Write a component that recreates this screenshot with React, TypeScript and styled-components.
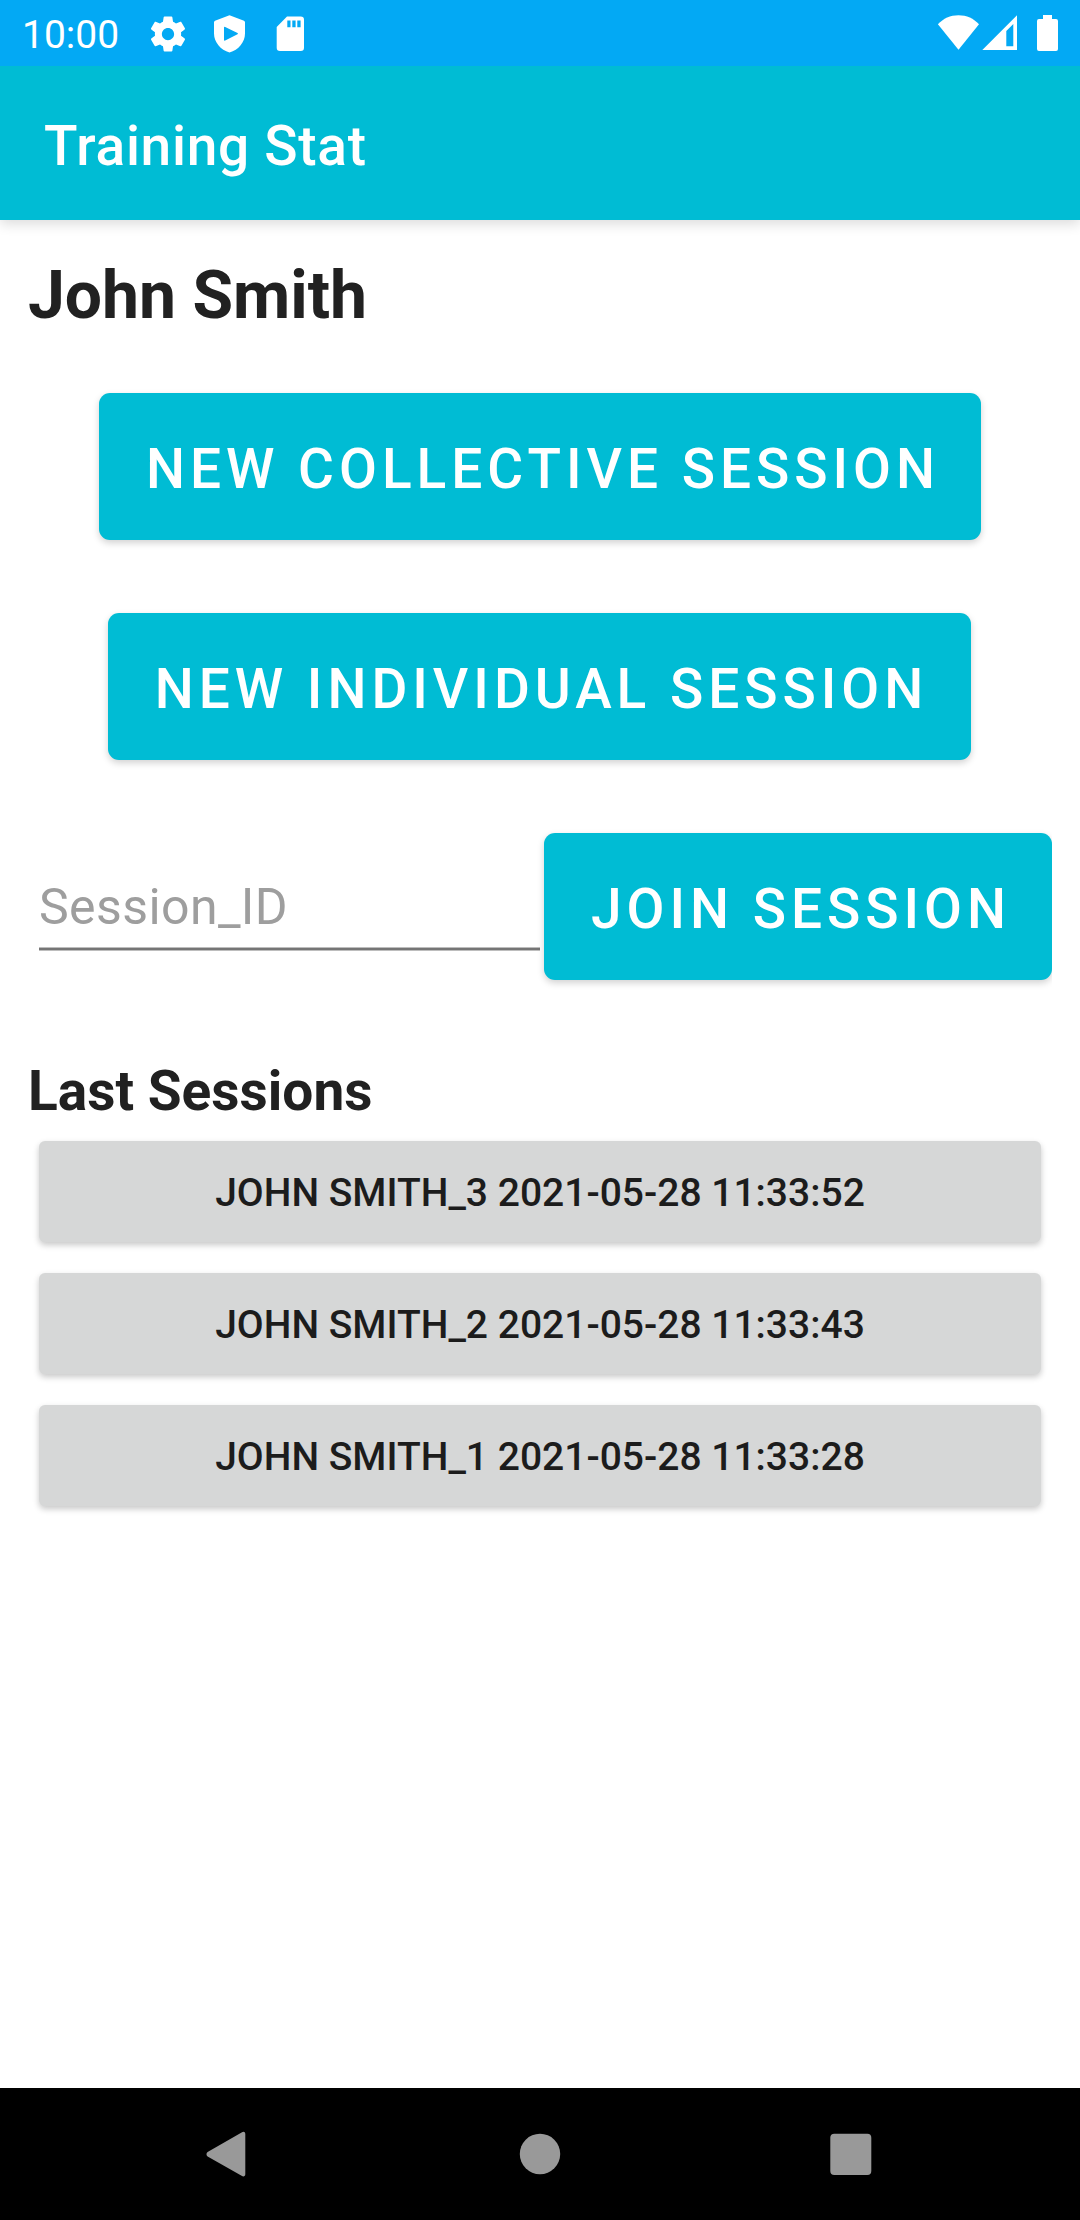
import React from 'react';
import styled, { createGlobalStyle } from 'styled-components';

const GlobalStyle = createGlobalStyle`
  * { box-sizing: border-box; }
  body { margin: 0; background: #fff; }
  button, input { font-family: inherit; }
`;

const Screen = styled.div`
  width: 1080px;
  height: 2220px;
  display: flex;
  flex-direction: column;
  background: #fff;
  color: #212121;
  font-family: Roboto, sans-serif;
  overflow: hidden;
`;

const StatusBar = styled.header`
  height: 66px;
  flex: none;
  display: flex;
  justify-content: space-between;
  padding: 0 22px;
  background: #03a9f4;
  color: #fff;
`;

const Notifications = styled.div`
  display: flex;
  align-items: center;
  gap: 19px;
  padding-top: 1px;
`;

const SystemIcons = styled.div`
  display: flex;
  align-items: center;
  gap: 3px;
`;

const Clock = styled.span`
  width: 106px;
  padding-top: 2px;
  font-size: 39px;
  line-height: 46px;
`;

const Icon = styled.svg`
  display: block;
  flex: none;
  fill: currentColor;
`;

const BatterySvg = styled(Icon)`
  margin-left: 17px;
`;

const AppBar = styled.div`
  height: 154px;
  flex: none;
  display: flex;
  align-items: center;
  padding: 6px 44px 0;
  background: #00bcd4;
  box-shadow: 0 4px 12px rgba(0, 0, 0, 0.14);
  clip-path: inset(0 0 -30px 0);
`;

const AppTitle = styled.h1`
  margin: 0;
  color: #fff;
  font-size: 55px;
  font-weight: 500;
  line-height: 64px;
  letter-spacing: 0.72px;
`;

const Content = styled.main`
  flex: 1;
  display: flex;
  flex-direction: column;
  align-items: center;
  padding: 36px 28px 0;
`;

const UserName = styled.h2`
  align-self: stretch;
  margin: 0 0 57px;
  font-size: 66px;
  font-weight: 700;
  line-height: 80px;
`;

const ActionButton = styled.button<{ $width: number }>`
  width: ${(p) => p.$width}px;
  height: 147px;
  flex: none;
  padding: 5px 0 0 6px;
  border: 0;
  border-radius: 11px;
  background: #00bcd4;
  color: #fff;
  font-size: 55px;
  font-weight: 500;
  letter-spacing: 4.98px;
  line-height: 64px;
  white-space: nowrap;
  text-transform: uppercase;
  box-shadow: 0 3px 7px rgba(0, 0, 0, 0.18);
`;

const Actions = styled.div`
  display: flex;
  flex-direction: column;
  align-items: flex-start;
  gap: 73px;
`;

const IndividualButton = styled(ActionButton)`
  margin-left: 9px;
  padding-left: 4px;
`;

const JoinRow = styled.div`
  align-self: stretch;
  display: flex;
  justify-content: space-between;
  margin-top: 73px;
  padding-left: 11px;
  clip-path: inset(-14px 0 -14px 0);
`;

const SessionInput = styled.input`
  width: 501px;
  height: 81px;
  margin-top: 36px;
  padding: 0 0 3px;
  border: 0;
  border-bottom: 2px solid #757575;
  border-radius: 0;
  background: transparent;
  font-size: 50px;
  letter-spacing: 0.4px;
  outline: none;
  box-shadow: 0 1px 0 #bdbdbd, inset 0 -1px 0 #bdbdbd;
  &::placeholder { color: #9e9e9e; opacity: 1; }
`;

const SectionTitle = styled.h3`
  align-self: stretch;
  margin: 79px 0 18px;
  font-size: 55px;
  font-weight: 700;
  line-height: 64px;
`;

const SessionList = styled.div`
  align-self: stretch;
  display: flex;
  flex-direction: column;
  gap: 31px;
  padding: 0 11px;
`;

const SessionButton = styled.button`
  height: 101px;
  padding: 3px 0 0;
  border: 0;
  border-radius: 6px;
  background: #d6d7d7;
  color: #1c1c1c;
  font-size: 39px;
  font-weight: 500;
  text-transform: uppercase;
  box-shadow: 0 3px 6px rgba(0, 0, 0, 0.22);
`;

const NavBar = styled.nav`
  height: 132px;
  flex: none;
  display: flex;
  align-items: center;
  justify-content: space-between;
  padding: 0 208px 0 206px;
  background: #000;
  color: #999;
`;

const sessions = [
  'John Smith_3 2021-05-28 11:33:52',
  'John Smith_2 2021-05-28 11:33:43',
  'John Smith_1 2021-05-28 11:33:28',
];

const GearIcon = () => (
  <Icon width="42" height="42" viewBox="0 0 24 24">
    <path d="M19.43 12.98c.04-.32.07-.64.07-.98s-.03-.66-.07-.98l2.11-1.65c.19-.15.24-.42.12-.64l-2-3.46c-.12-.22-.39-.3-.61-.22l-2.49 1c-.52-.4-1.08-.73-1.69-.98l-.38-2.65C14.46 2.18 14.25 2 14 2h-4c-.25 0-.46.18-.49.42l-.38 2.65c-.61.25-1.17.59-1.69.98l-2.49-1c-.23-.09-.49 0-.61.22l-2 3.46c-.13.22-.07.49.12.64l2.11 1.65c-.04.32-.07.65-.07.98s.03.66.07.98l-2.11 1.65c-.19.15-.24.42-.12.64l2 3.46c.12.22.39.3.61.22l2.49-1c.52.4 1.08.73 1.69.98l.38 2.65c.03.24.24.42.49.42h4c.25 0 .46-.18.49-.42l.38-2.65c.61-.25 1.17-.59 1.69-.98l2.49 1c.23.09.49 0 .61-.22l2-3.46c.12-.22.07-.49-.12-.64l-2.11-1.65zM12 15.5c-1.93 0-3.5-1.57-3.5-3.5s1.57-3.5 3.5-3.5 3.5 1.57 3.5 3.5-1.57 3.5-3.5 3.5z" />
  </Icon>
);

const ShieldIcon = () => (
  <Icon width="42" height="42" viewBox="0 0 42 42">
    <path
      fillRule="evenodd"
      d="M21.5 2.2 36 7.700Q37 8.200 37 9.300V20.500C37 29 30.500 37 21.500 39.500 12.500 37 6 29 6 20.500V9.300Q6 8.200 7 7.700zM16 14.600V26.800Q16 28 17.200 27.500L29.500 21.300Q30.500 20.600 29.500 20L17.200 13.900Q16 13.500 16 14.600z"
    />
  </Icon>
);

const SdCardIcon = () => (
  <Icon width="42" height="42" viewBox="0 0 42 42">
    <path
      fillRule="evenodd"
      d="M18 3.500H31.700A3.300 3.300 0 0 1 35 6.800V34.700A3.300 3.300 0 0 1 31.700 38H11A3.300 3.300 0 0 1 7.700 34.700V14zM18.300 7.500v6.800h3.200V7.500zM23.300 7.500v6.800h3.300V7.500zM28.300 7.500v6.800h3.300V7.500z"
    />
  </Icon>
);

const WifiIcon = () => (
  <Icon width="42" height="36" viewBox="0 0 42 36">
    <path d="M.9 9.300C6.300 3.500 13.300 .3 21.500 .3S36.600 3.500 42 9.300L21.500 34.700z" />
  </Icon>
);

const SignalIcon = () => (
  <Icon width="35" height="36" viewBox="0 0 35 36">
    <path fillRule="evenodd" d="M35 .3v34.700H.300zM31.300 9l-7 7v15.300h7z" />
  </Icon>
);

const BatteryIcon = () => (
  <BatterySvg width="21" height="36" viewBox="0 0 21 36">
    <path d="M6 0h9v4h4a2 2 0 0 1 2 2v28a2 2 0 0 1-2 2H2a2 2 0 0 1-2-2V6a2 2 0 0 1 2-2h4z" />
  </BatterySvg>
);

const BackIcon = () => (
  <Icon width="44" height="46" viewBox="0 0 44 46">
    <path d="M35.600 1.500c1.800-1.400 3.700-.6 3.700 1.500v40.300c0 2.100-1.900 2.900-3.700 1.500L1.600 25.500a2.900 2.900 0 0 1 0-4.600z" />
  </Icon>
);

const HomeIcon = () => (
  <Icon width="42" height="42" viewBox="0 0 42 42">
    <circle cx="21" cy="21" r="20.200" />
  </Icon>
);

const RecentsIcon = () => (
  <Icon width="42" height="42" viewBox="0 0 42 42">
    <rect x=".3" y=".8" width="41" height="41.200" rx="4" />
  </Icon>
);

export default function App() {
  return (
    <>
      <GlobalStyle />
      <Screen>
        <StatusBar>
          <Notifications>
            <Clock>10:00</Clock>
            <GearIcon />
            <ShieldIcon />
            <SdCardIcon />
          </Notifications>
          <SystemIcons>
            <WifiIcon />
            <SignalIcon />
            <BatteryIcon />
          </SystemIcons>
        </StatusBar>
        <AppBar>
          <AppTitle>Training Stat</AppTitle>
        </AppBar>
        <Content>
          <UserName>John Smith</UserName>
          <Actions>
            <ActionButton $width={882}>New collective session</ActionButton>
            <IndividualButton $width={863}>New individual session</IndividualButton>
          </Actions>
          <JoinRow>
            <SessionInput placeholder="Session_ID" />
            <ActionButton $width={508}>Join session</ActionButton>
          </JoinRow>
          <SectionTitle>Last Sessions</SectionTitle>
          <SessionList>
            {sessions.map((s) => (
              <SessionButton key={s}>{s}</SessionButton>
            ))}
          </SessionList>
        </Content>
        <NavBar>
          <BackIcon />
          <HomeIcon />
          <RecentsIcon />
        </NavBar>
      </Screen>
    </>
  );
}
